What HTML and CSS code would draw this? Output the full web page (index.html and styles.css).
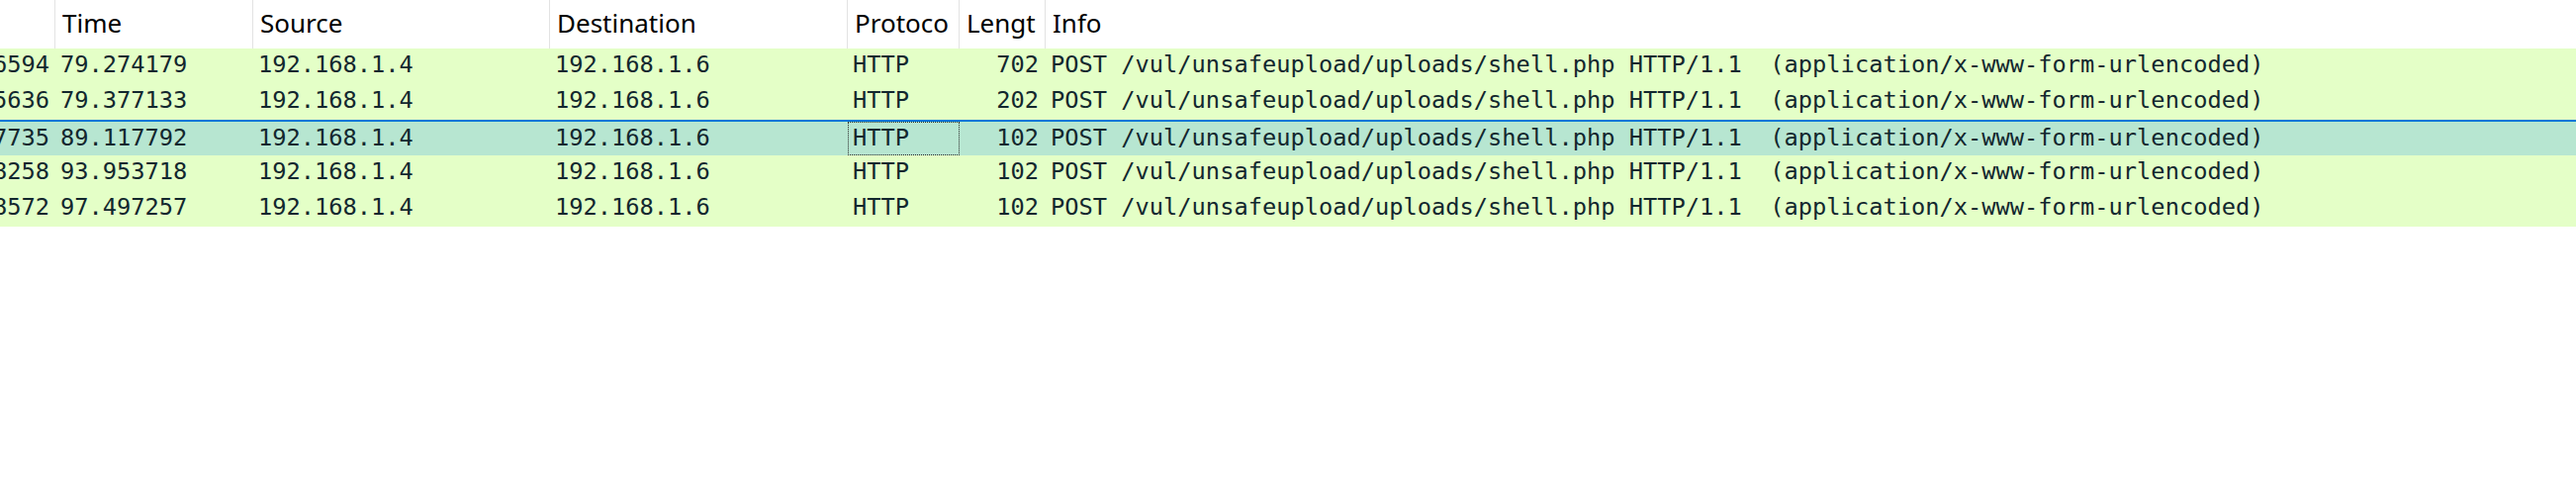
FILE: index.html
```html
<!DOCTYPE html>
<html>
<head>
<meta charset="utf-8">
<link rel="stylesheet" href="styles.css">
</head>
<body>
<div class="packet-list">
  <div class="row header">
    <div class="hcell num"></div>
    <div class="hcell">Time</div>
    <div class="hcell">Source</div>
    <div class="hcell">Destination</div>
    <div class="hcell">Protoco</div>
    <div class="hcell">Lengt</div>
    <div class="hcell last">Info</div>
  </div>
  <div class="row pkt">
    <div class="cell num"><span>6594</span></div>
    <div class="cell">79.274179</div>
    <div class="cell">192.168.1.4</div>
    <div class="cell">192.168.1.6</div>
    <div class="cell">HTTP</div>
    <div class="cell right">702</div>
    <div class="cell">POST /vul/unsafeupload/uploads/shell.php HTTP/1.1  (application/x-www-form-urlencoded)</div>
  </div>
  <div class="row pkt">
    <div class="cell num"><span>5636</span></div>
    <div class="cell">79.377133</div>
    <div class="cell">192.168.1.4</div>
    <div class="cell">192.168.1.6</div>
    <div class="cell">HTTP</div>
    <div class="cell right">202</div>
    <div class="cell">POST /vul/unsafeupload/uploads/shell.php HTTP/1.1  (application/x-www-form-urlencoded)</div>
  </div>
  <div class="row pkt selected">
    <div class="cell num"><span>7735</span></div>
    <div class="cell">89.117792</div>
    <div class="cell">192.168.1.4</div>
    <div class="cell">192.168.1.6</div>
    <div class="cell focus">HTTP</div>
    <div class="cell right">102</div>
    <div class="cell">POST /vul/unsafeupload/uploads/shell.php HTTP/1.1  (application/x-www-form-urlencoded)</div>
  </div>
  <div class="row pkt">
    <div class="cell num"><span>8258</span></div>
    <div class="cell">93.953718</div>
    <div class="cell">192.168.1.4</div>
    <div class="cell">192.168.1.6</div>
    <div class="cell">HTTP</div>
    <div class="cell right">102</div>
    <div class="cell">POST /vul/unsafeupload/uploads/shell.php HTTP/1.1  (application/x-www-form-urlencoded)</div>
  </div>
  <div class="row pkt">
    <div class="cell num"><span>8572</span></div>
    <div class="cell">97.497257</div>
    <div class="cell">192.168.1.4</div>
    <div class="cell">192.168.1.6</div>
    <div class="cell">HTTP</div>
    <div class="cell right">102</div>
    <div class="cell">POST /vul/unsafeupload/uploads/shell.php HTTP/1.1  (application/x-www-form-urlencoded)</div>
  </div>
</div>
</body>
</html>
```
FILE: styles.css
```css
html, body {
  margin: 0;
  padding: 0;
  background: #ffffff;
}
.packet-list {
  width: 2604px;
}
.row {
  display: grid;
  grid-template-columns: 56px 200px 300px 301px 113px 87px 1fr;
}
.header {
  height: 49px;
  background: #ffffff;
  font-family: "Noto Sans", "Open Sans", sans-serif;
  font-size: 26px;
  color: #000000;
}
.hcell {
  border-right: 1px solid #e3e3e3;
  padding-left: 7px;
  display: flex;
  align-items: center;
  white-space: nowrap;
  overflow: hidden;
  padding-bottom: 3px;
}
.hcell.last {
  border-right: none;
}
.pkt {
  height: 36px;
  background: #e4ffc7;
  color: #12272e;
  font-family: "DejaVu Sans Mono", "Liberation Mono", monospace;
  font-size: 23.7px;
}
.pkt.selected {
  background: #b7e6d1;
  border-top: 2px solid #0078d7;
  height: 34px;
}
.cell {
  padding-left: 5px;
  white-space: pre;
  overflow: hidden;
  display: flex;
  align-items: center;
  padding-bottom: 4px;
}
.pkt.selected .cell {
  padding-bottom: 2px;
}
.cell.num {
  justify-content: flex-end;
  padding-left: 0;
  padding-right: 6px;
}
.cell.num span {
  flex: none;
}
.cell.right {
  justify-content: flex-end;
  padding-right: 7px;
}
.cell.focus {
  outline: 1px dotted #2a2a2a;
  outline-offset: -1px;
}
```
